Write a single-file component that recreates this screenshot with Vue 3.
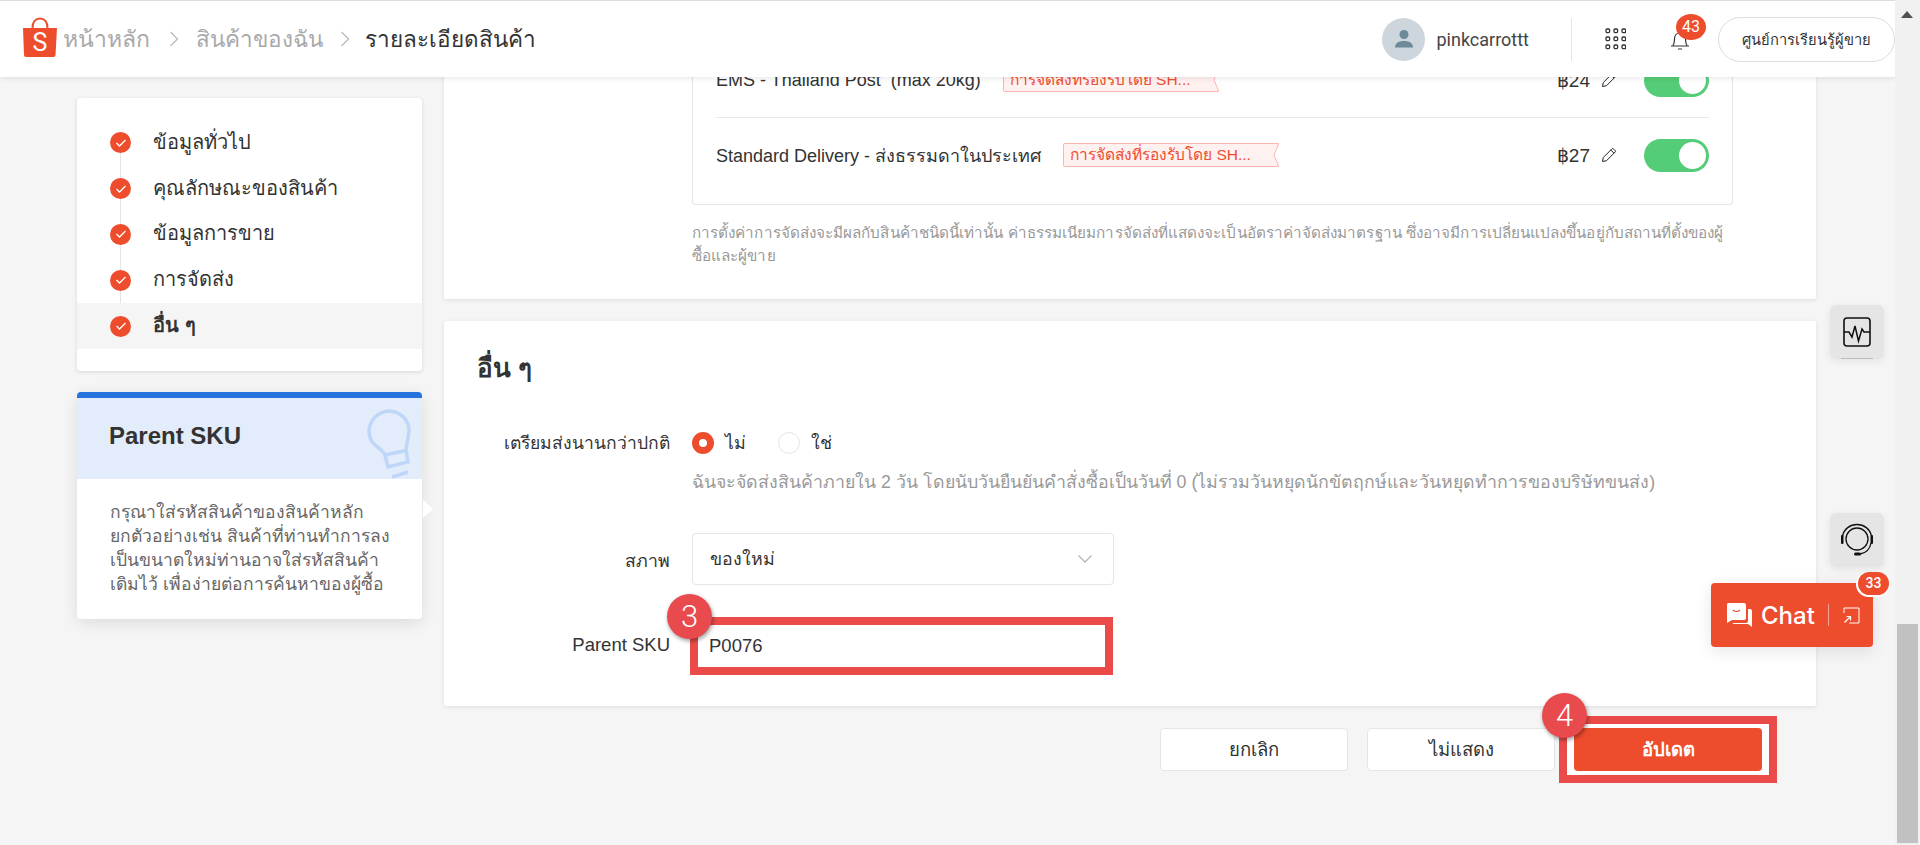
<script setup>
const steps = [
  { label: 'ข้อมูลทั่วไป' },
  { label: 'คุณลักษณะของสินค้า' },
  { label: 'ข้อมูลการขาย' },
  { label: 'การจัดส่ง' },
  { label: 'อื่น ๆ', active: true }
]

const couriers = [
  { name: 'EMS - Thailand Post  (max 20kg)', tag: 'การจัดส่งที่รองรับโดย SH...', price: '฿24' },
  { name: 'Standard Delivery - ส่งธรรมดาในประเทศ', tag: 'การจัดส่งที่รองรับโดย SH...', price: '฿27' }
]
</script>

<template>
  <div class="screen">
    <div class="viewport">
      <header class="topbar">
        <svg class="logo" viewBox="0 0 36 40">
          <path d="M1 11h34l-1.500 27a2 2 0 0 1-2 2H4a2 2 0 0 1-2-2z" fill="#ee4d2d" />
          <path d="M10.500 11c0-6 3-9.500 7.500-9.500s7.500 3.500 7.500 9.500" fill="none" stroke="#ee4d2d" stroke-width="2" />
          <text x="18" y="34" text-anchor="middle" class="logo-s">S</text>
        </svg>
        <nav class="crumbs">
          <span class="crumb home">หน้าหลัก</span>
          <svg class="crumb-sep" viewBox="0 0 10 16"><path d="M1.500 1l7 7-7 7" fill="none" stroke="#b7b7b7" stroke-width="1.200" /></svg>
          <span class="crumb">สินค้าของฉัน</span>
          <svg class="crumb-sep" viewBox="0 0 10 16"><path d="M1.500 1l7 7-7 7" fill="none" stroke="#b7b7b7" stroke-width="1.200" /></svg>
          <span class="crumb current">รายละเอียดสินค้า</span>
        </nav>
        <div class="account">
          <span class="avatar">
            <svg viewBox="0 0 20 20" width="20" height="20">
              <circle cx="10" cy="5.500" r="4.500" fill="#6d8a99" />
              <path d="M1 18.500c0-4.500 4-6.500 9-6.500s9 2 9 6.500z" fill="#6d8a99" />
            </svg>
          </span>
          <span class="username">pinkcarrottt</span>
        </div>
        <span class="divider"></span>
        <svg class="apps" viewBox="0 0 21 22">
          <g fill="none" stroke="#333" stroke-width="1.300">
            <rect x="1" y="1" width="3.600" height="3.600" rx="1" />
            <rect x="9" y="1" width="3.600" height="3.600" rx="1" />
            <rect x="17" y="1" width="3.600" height="3.600" rx="1" />
            <rect x="1" y="9" width="3.600" height="3.600" rx="1" />
            <rect x="9" y="9" width="3.600" height="3.600" rx="1" />
            <rect x="17" y="9" width="3.600" height="3.600" rx="1" />
            <rect x="1" y="17" width="3.600" height="3.600" rx="1" />
            <rect x="9" y="17" width="3.600" height="3.600" rx="1" />
            <rect x="17" y="17" width="3.600" height="3.600" rx="1" />
          </g>
        </svg>
        <span class="bell">
          <svg viewBox="0 0 20 22" width="20" height="22">
            <path d="M3 16.500c1.500-2 1.500-4 1.500-6.500 0-3.500 2-6 5.500-6s5.500 2.500 5.500 6c0 2.500 0 4.500 1.500 6.500M1 17h18M8 20h4" fill="none" stroke="#333" stroke-width="1.200" />
          </svg>
          <span class="bell-count">43</span>
        </span>
        <button class="learn">ศูนย์การเรียนรู้ผู้ขาย</button>
      </header>

      <div class="columns">
        <aside class="side">
          <ul class="steps">
            <li v-for="(step, i) in steps" :key="i" class="step" :class="{ active: step.active }">
              <span class="tick">
                <svg viewBox="0 0 12 10" width="12" height="10"><path d="M1.500 5l3 3 6-6" fill="none" stroke="#fff" stroke-width="1.300" /></svg>
              </span>
              <span class="step-text">{{ step.label }}</span>
            </li>
          </ul>

          <div class="tips">
            <div class="tips-head">
              <span class="tips-title">Parent SKU</span>
              <svg class="bulb" viewBox="0 0 50 75" width="50" height="75">
                <g fill="none" stroke="#bed6f8" stroke-width="3.500">
                  <path d="M20 49L41 44.500C41 39 44 32 44 23A20 20 0 1 0 8 37C13 42 18 44 20 49Z" />
                  <path d="M20 49L23 61L43 56L41 44.500" />
                  <path d="M27 71L43 66" />
                </g>
              </svg>
            </div>
            <p class="tips-body">กรุณาใส่รหัสสินค้าของสินค้าหลัก<br />ยกตัวอย่างเช่น สินค้าที่ท่านทำการลง<br />เป็นขนาดใหม่ท่านอาจใส่รหัสสินค้า<br />เดิมไว้ เพื่อง่ายต่อการค้นหาของผู้ซื้อ</p>
            <span class="tips-arrow"></span>
          </div>
        </aside>

        <main class="main">
          <section class="card shipping">
            <div class="courier-box">
              <div v-for="c in couriers" :key="c.price" class="courier">
                <span class="courier-name">{{ c.name }}</span>
                <span class="tag">
                  {{ c.tag }}
                  <svg class="tag-notch" viewBox="0 0 6 24" width="6" height="24" preserveAspectRatio="none"><path d="M6.500 -1L1 12L6.500 25Z" fill="#fff" stroke="#fdb6ad" /></svg>
                </span>
                <span class="price">{{ c.price }}</span>
                <svg class="pencil" viewBox="0 0 16 16" width="16" height="16">
                  <path d="M1.500 14.500l.8-4L11 1.800a1 1 0 0 1 1.400 0l1.800 1.800a1 1 0 0 1 0 1.400L5.500 13.700zM9.800 3l3.200 3.200" fill="none" stroke="#222" stroke-width="1" />
                </svg>
                <span class="toggle"><span class="knob"></span></span>
              </div>
            </div>
            <p class="note">การตั้งค่าการจัดส่งจะมีผลกับสินค้าชนิดนี้เท่านั้น ค่าธรรมเนียมการจัดส่งที่แสดงจะเป็นอัตราค่าจัดส่งมาตรฐาน ซึ่งอาจมีการเปลี่ยนแปลงขึ้นอยู่กับสถานที่ตั้งของผู้<br />ซื้อและผู้ขาย</p>
          </section>

          <section class="card others">
            <h2 class="others-title">อื่น ๆ</h2>
            <div class="form">
              <label class="form-label radio-label">เตรียมส่งนานกว่าปกติ</label>
              <div class="radios">
                <span class="radio on"></span><span class="radio-text">ไม่</span>
                <span class="radio"></span><span class="radio-text">ใช่</span>
              </div>
              <span></span>
              <p class="hint">ฉันจะจัดส่งสินค้าภายใน 2 วัน โดยนับวันยืนยันคำสั่งซื้อเป็นวันที่ 0 (ไม่รวมวันหยุดนักขัตฤกษ์และวันหยุดทำการของบริษัทขนส่ง)</p>

              <label class="form-label select-label">สภาพ</label>
              <div class="select">
                <span>ของใหม่</span>
                <svg viewBox="0 0 16 10" width="16" height="10"><path d="M1.500 1.500L8 8l6.500-6.500" fill="none" stroke="#b5b5b5" stroke-width="1.300" /></svg>
              </div>

              <label class="form-label sku-label">Parent SKU</label>
              <div class="sku">
                P0076
                <span class="step-badge">3</span>
              </div>
            </div>
          </section>

          <div class="actions">
            <button class="btn">ยกเลิก</button>
            <button class="btn">ไม่แสดง</button>
            <div class="update-wrap">
              <span class="callout"></span>
              <button class="btn primary">อัปเดต</button>
              <span class="step-badge">4</span>
            </div>
          </div>
        </main>
      </div>

      <button class="float-btn pulse">
        <svg viewBox="0 0 28 30" width="28" height="30">
          <rect x="1" y="1" width="26" height="28" rx="3" fill="none" stroke="#111" stroke-width="1.600" />
          <path d="M1 15h5l3 5 3-11 3.500 15 3.500-12 2 3h6" fill="none" stroke="#111" stroke-width="1.500" />
        </svg>
      </button>
      <button class="float-btn support">
        <svg viewBox="0 0 34 34" width="34" height="34">
          <g fill="none" stroke="#111">
            <circle cx="17" cy="16" r="11" stroke-width="1.300" />
            <path d="M2.500 13C4 6 10 1.500 17 1.500S30 6 31.500 13" stroke-width="1.300" />
            <path d="M31 20c-1 6-5 10-11 11" stroke-width="1.300" />
          </g>
          <rect x="1" y="12" width="2.500" height="9" rx="1" fill="#111" />
          <rect x="30.500" y="12" width="2.500" height="9" rx="1" fill="#111" />
          <rect x="14" y="29.500" width="7" height="3" rx="1.500" fill="#111" />
        </svg>
      </button>
      <div class="chat">
        <svg viewBox="0 0 26 25" width="26" height="25">
          <path d="M2 0h16a2 2 0 0 1 2 2v13a2 2 0 0 1-2 2H6l-5 3V2a2 2 0 0 1 1-2z" fill="#fff" />
          <path d="M22 6h2a2 2 0 0 1 2 2v16l-4-3H8a2 2 0 0 1-1.500-1H20a2 2 0 0 0 2-2z" fill="#fff" />
          <path d="M7 7c2 2 5 2 7 0" fill="none" stroke="#ee4d2d" stroke-width="1.200" />
        </svg>
        <span class="chat-text">Chat</span>
        <span class="chat-line"></span>
        <svg viewBox="0 0 17 17" width="17" height="17">
          <path d="M1 6V1h15v15H6" fill="none" stroke="#fff" stroke-width="1" />
          <path d="M1.500 15.500L7.500 9.500M3.500 9.500h4v4" fill="none" stroke="#fff" stroke-width="1.200" />
        </svg>
        <span class="chat-count">33</span>
      </div>
    </div>

    <div class="scrollbar">
      <svg viewBox="0 0 12 7" width="12" height="7"><path d="M0 7L6 0l6 7z" fill="#505050" /></svg>
      <span class="thumb"></span>
    </div>
  </div>
</template>

<style>
html, body {
  margin: 0;
  background: #f5f5f5;
}
</style>

<style scoped>
.screen {
  display: flex;
  width: 1920px;
  height: 845px;
  overflow: hidden;
  font-family: "Liberation Sans", "Noto Sans", sans-serif;
  color: #333;
}

.viewport {
  position: relative;
  width: 1895px;
  height: 845px;
  overflow: hidden;
  background: #f5f5f5;
}

.topbar {
  position: absolute;
  z-index: 5;
  top: 0;
  left: 0;
  right: 0;
  height: 76px;
  display: flex;
  align-items: center;
  background: #fff;
  border-top: 1px solid #ddd;
  box-shadow: 0 1px 6px rgba(0, 0, 0, 0.1);
  font-family: Roboto, "Liberation Sans", sans-serif;
}

.logo {
  width: 36px;
  height: 40px;
  margin-left: 22px;
  margin-top: -4px;
}

.logo-s {
  fill: #fff;
  font-family: Roboto, sans-serif;
  font-size: 25px;
}

.crumbs {
  display: flex;
  align-items: center;
  margin-left: 5px;
  font-size: 22.500px;
}

.crumb {
  color: #a9a9a9;
}

.crumb.home {
  font-size: 23px;
  margin-right: 2px;
}

.crumb.current {
  color: #333;
  margin-left: -2px;
}

.crumb-sep {
  width: 10px;
  height: 16px;
  margin: 0 17px;
}

.account {
  display: flex;
  align-items: center;
  gap: 11px;
  margin-left: auto;
}

.avatar {
  display: flex;
  align-items: center;
  justify-content: center;
  width: 43px;
  height: 43px;
  border-radius: 50%;
  background: #ccd6dc;
}

.username {
  font-size: 18px;
  color: #444;
}

.divider {
  width: 1px;
  height: 43px;
  margin-left: 42px;
  background: #e5e5e5;
}

.apps {
  width: 21px;
  height: 22px;
  margin-left: 33px;
  margin-top: -1px;
}

.bell {
  position: relative;
  display: flex;
  width: 20px;
  height: 22px;
  margin-left: 44px;
  margin-top: 2px;
}

.bell-count {
  position: absolute;
  top: -15px;
  left: 6px;
  width: 30px;
  height: 26px;
  border-radius: 50%;
  background: #ee4d2d;
  color: #fff;
  font-size: 16px;
  line-height: 26px;
  text-align: center;
}

.learn {
  width: 177px;
  height: 45px;
  margin-left: 28px;
  border: 1px solid #ddd;
  border-radius: 23px;
  background: #fff;
  color: #333;
  font-family: inherit;
  font-size: 14.700px;
}

.columns {
  display: flex;
  gap: 22px;
  padding-left: 77px;
}

.side {
  flex: none;
  width: 345px;
  padding-top: 98px;
}

.steps {
  margin: 0;
  padding: 22px 0 22px;
  list-style: none;
  background: #fff;
  border-radius: 4px;
  box-shadow: 0 1px 4px rgba(0, 0, 0, 0.12);
}

.step {
  position: relative;
  display: flex;
  align-items: center;
  gap: 22px;
  height: 45.800px;
  padding-left: 33px;
  font-size: 20px;
}

.step-text {
  margin-top: -2px;
}

.step:not(:last-child)::after {
  content: "";
  position: absolute;
  top: 50%;
  left: 43px;
  width: 1px;
  height: 46px;
  background: #e5e5e5;
}

.step.active {
  background: #f5f5f5;
  font-weight: 700;
}

.tick {
  position: relative;
  z-index: 1;
  display: flex;
  align-items: center;
  justify-content: center;
  width: 21px;
  height: 21px;
  border-radius: 50%;
  background: #ee4d2d;
}

.tips {
  position: relative;
  margin-top: 21px;
  background: #fff;
  border-top: 6px solid #2673dd;
  border-radius: 4px;
  box-shadow: 0 4px 16px rgba(0, 0, 0, 0.1);
}

.tips-head {
  position: relative;
  height: 81px;
  overflow: hidden;
  background: #e3ecfa;
}

.tips-title {
  position: absolute;
  top: 23px;
  left: 32px;
  font-size: 24px;
  font-weight: 700;
  line-height: 30px;
}

.bulb {
  position: absolute;
  top: 8px;
  right: 7px;
}

.tips-body {
  margin: 0;
  padding: 21px 15px 23px 33px;
  color: #666;
  font-size: 17.500px;
  line-height: 24px;
  white-space: nowrap;
}

.tips-arrow {
  position: absolute;
  top: 102px;
  left: 100%;
  margin-left: 1px;
  border-top: 9px solid transparent;
  border-bottom: 9px solid transparent;
  border-left: 10px solid #fff;
}

.main {
  flex: none;
  width: 1372px;
}

.card {
  background: #fff;
  border-radius: 2px;
  box-shadow: 0 1px 4px rgba(0, 0, 0, 0.1);
}

.shipping {
  padding: 0 84px 32px 248px;
}

.courier-box {
  padding: 43px 23px 12px;
  border: 1px solid #e5e5e5;
  border-top: 0;
  border-radius: 0 0 4px 4px;
  margin-right: -1px;
}

.courier {
  display: flex;
  align-items: center;
  height: 74px;
  font-size: 18px;
}

.courier:first-child {
  border-bottom: 1px solid #e8e8e8;
}

.courier-name {
  white-space: pre;
  margin-right: 22px;
}

.tag {
  position: relative;
  width: 216px;
  height: 24px;
  box-sizing: border-box;
  padding-left: 6px;
  border: 1px solid #fdb6ad;
  border-radius: 2px;
  background: #fff1f0;
  color: #ee4d2d;
  font-size: 15.500px;
  line-height: 22px;
  white-space: nowrap;
}

.tag-notch {
  position: absolute;
  top: -1px;
  right: -1px;
}

.price {
  margin-left: auto;
  font-size: 19px;
}

.pencil {
  margin-left: 11px;
}

.toggle {
  display: flex;
  justify-content: flex-end;
  align-items: center;
  width: 65px;
  height: 33px;
  margin-left: 27px;
  padding-right: 3px;
  box-sizing: border-box;
  border-radius: 17px;
  background: #55cc77;
}

.knob {
  width: 27px;
  height: 27px;
  border-radius: 50%;
  background: #fff;
}

.note {
  margin: 16px 0 0;
  color: #999;
  font-size: 15.250px;
  letter-spacing: 0.070px;
  line-height: 23px;
  white-space: nowrap;
}

.others {
  margin-top: 22px;
  padding: 32px 33px 31px;
}

.others-title {
  margin: 0 0 40px;
  font-size: 26px;
  line-height: 30px;
}

.form {
  display: grid;
  grid-template-columns: 193px 1fr;
  column-gap: 22px;
  font-size: 17.750px;
}

.form-label {
  text-align: right;
  color: #333;
  line-height: 24px;
}

.radio-label {
  padding-top: 8px;
  font-size: 17.500px;
}

.radios {
  display: flex;
  align-items: center;
  height: 40px;
}

.radio {
  flex: none;
  width: 22px;
  height: 22px;
  box-sizing: border-box;
  border: 1px solid #e5e5e5;
  border-radius: 50%;
  background: #fff;
}

.radio.on {
  border: 7px solid #ee4d2d;
}

.radio-text {
  width: 20px;
  margin: 0 33px 0 11px;
}

.hint {
  margin: 8px 0 39px;
  color: #999;
  line-height: 23px;
}

.select-label {
  padding-top: 16px;
}

.select {
  display: flex;
  align-items: center;
  justify-content: space-between;
  width: 422px;
  height: 52px;
  box-sizing: border-box;
  padding: 0 20px 0 17px;
  border: 1px solid #e5e5e5;
  border-radius: 4px;
}

.sku-label {
  padding-top: 48px;
  font-size: 18.500px;
}

.sku {
  position: relative;
  display: flex;
  align-items: center;
  width: 423px;
  height: 58px;
  box-sizing: border-box;
  margin: 32px 0 0 -2px;
  padding-left: 11px;
  border: 8px solid #ea4b48;
  font-size: 18.500px;
}

.step-badge {
  position: absolute;
  z-index: 3;
  width: 45px;
  height: 45px;
  border-radius: 50%;
  background: #e84a4d;
  box-shadow: 1px 2px 4px rgba(0, 0, 0, 0.4);
  color: #fff;
  font-family: Roboto, sans-serif;
  font-size: 31px;
  font-weight: 300;
  line-height: 45px;
  text-align: center;
}

.sku .step-badge {
  top: -31px;
  left: -31px;
}

.actions {
  display: flex;
  justify-content: flex-end;
  gap: 19px;
  margin-top: 22px;
  padding-right: 54px;
}

.btn {
  position: relative;
  z-index: 1;
  width: 188px;
  height: 43px;
  border: 1px solid #e5e5e5;
  border-radius: 4px;
  background: #fff;
  color: #333;
  font-family: inherit;
  font-size: 18.500px;
}

.primary {
  display: block;
  border: 0;
  background: #ee4d2d;
  color: #fff;
  font-weight: 700;
}

.update-wrap {
  position: relative;
}

.callout {
  position: absolute;
  inset: -12px -15px;
  border: 8px solid #ea4b48;
  background: #fff;
}

.update-wrap .step-badge {
  top: -35px;
  left: -32px;
}

.float-btn {
  position: absolute;
  left: 1830px;
  display: flex;
  align-items: center;
  justify-content: center;
  width: 54px;
  height: 54px;
  padding: 0;
  border: 0;
  border-radius: 6px;
  background: #e5e5e5;
  box-shadow: 0 2px 8px rgba(0, 0, 0, 0.08);
}

.pulse {
  top: 305px;
}

.pulse::after {
  content: "";
  position: absolute;
  left: 11px;
  right: 11px;
  bottom: 0;
  height: 1px;
  background: #bdbdbd;
}

.support {
  top: 513px;
}

.chat {
  position: absolute;
  top: 583px;
  left: 1711px;
  display: flex;
  align-items: center;
  width: 162px;
  height: 64px;
  box-sizing: border-box;
  padding-left: 15px;
  border-radius: 4px;
  background: #ee4d2d;
  box-shadow: 0 4px 16px rgba(0, 0, 0, 0.1);
  color: #fff;
}

.chat-text {
  margin-left: 9px;
  font-family: Inter, Roboto, sans-serif;
  font-size: 24px;
  font-weight: 500;
}

.chat-line {
  width: 1px;
  height: 22px;
  margin: 0 14px 0 13px;
  background: rgba(255, 255, 255, 0.5);
}

.chat-count {
  position: absolute;
  top: -11px;
  right: -16px;
  width: 31px;
  height: 23px;
  box-sizing: content-box;
  border-radius: 12px;
  background: #ee4d2d;
  box-shadow: -1px 1px 0 1px #fff;
  font-family: Roboto, sans-serif;
  font-size: 14px;
  font-weight: 500;
  line-height: 23px;
  text-align: center;
}

.scrollbar {
  position: relative;
  flex: 1;
  background: #f1f1f1;
  text-align: center;
}

.scrollbar svg {
  position: absolute;
  top: 11px;
  left: 6px;
}

.thumb {
  position: absolute;
  top: 624px;
  left: 2px;
  width: 21px;
  height: 219px;
  background: #c1c1c1;
}
</style>
